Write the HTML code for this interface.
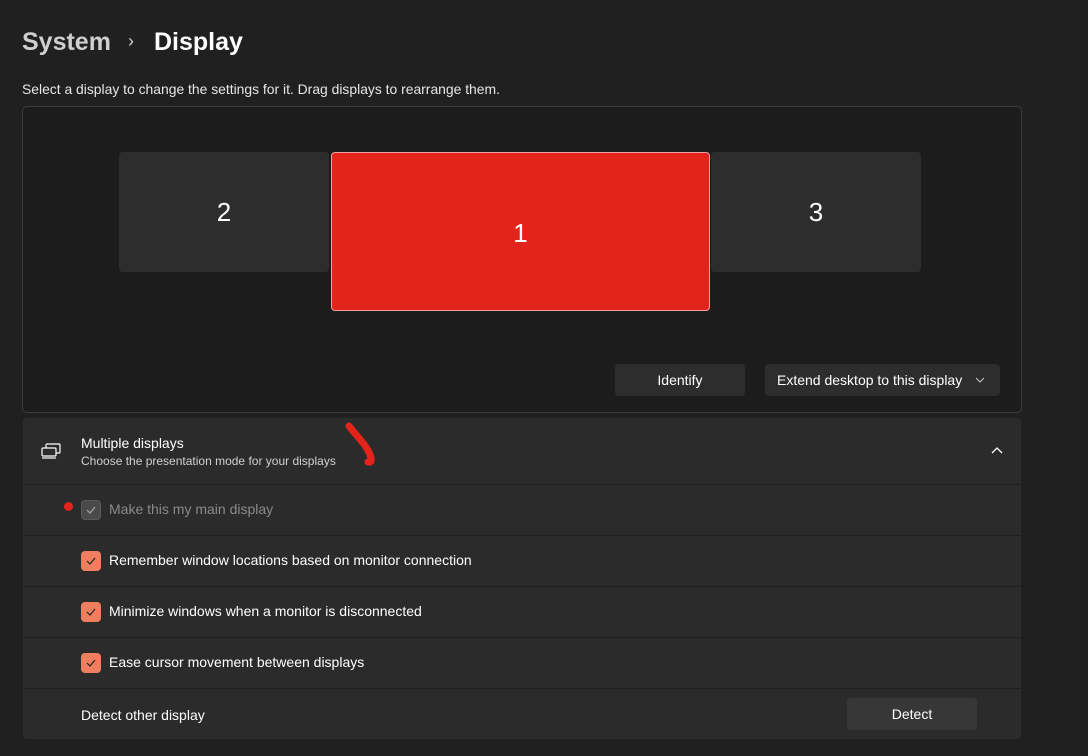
<!DOCTYPE html>
<html><head><style>
*{margin:0;padding:0;box-sizing:border-box}
body{width:1088px;height:756px;background:#202020;font-family:"Segoe UI","Liberation Sans",sans-serif;color:#fff;position:relative;overflow:hidden}
.abs{position:absolute}
.mon{position:absolute;background:#2d2d2d;border-radius:4px;display:flex;align-items:center;justify-content:center;font-size:26px;color:#fff}
.btn{position:absolute;background:#2d2d2d;border-radius:4px;font-size:14px;color:#fff;display:flex;align-items:center}
.row{position:absolute;left:23px;width:998px;background:#2b2b2b}
.cb{position:absolute;left:81px;width:20px;height:20px;border-radius:4px;background:#ef7e61}
.cb svg{position:absolute;left:4px;top:4px}
.lbl{position:absolute;left:109px;font-size:14px;color:#fff}
</style></head><body>
<div class="abs" style="left:22px;top:28px;font-size:25px;font-weight:600;color:#cfcfcf">System</div>
<div class="abs" style="left:128px;top:31px;font-size:18px;color:#cfcfcf">›</div>
<div class="abs" style="left:154px;top:28px;font-size:25px;font-weight:600;color:#fff">Display</div>
<div class="abs" style="left:22px;top:81px;font-size:13.9px;color:#e6e6e6">Select a display to change the settings for it. Drag displays to rearrange them.</div>
<div class="abs" style="left:22px;top:106px;width:1000px;height:307px;background:#1c1c1c;border:1px solid #3c3c3c;border-radius:5px"></div>
<div class="mon" style="left:119px;top:152px;width:210px;height:120px">2</div>
<div class="mon" style="left:711px;top:152px;width:210px;height:120px">3</div>
<div class="mon" style="left:331px;top:152px;width:379px;height:159px;background:#e3241b;border:1px solid #f0a0a0;padding-top:4px">1</div>
<div class="btn" style="left:615px;top:364px;width:130px;height:32px;justify-content:center">Identify</div>
<div class="btn" style="left:765px;top:364px;width:235px;height:32px;padding-left:12px">Extend desktop to this display
<svg class="abs" style="left:210px;top:12px" width="10" height="8"><path d="M1 2l4 4 4-4" stroke="#ccc" fill="none" stroke-width="1"/></svg></div>
<div class="row" style="top:418px;height:66px;border-radius:4px 4px 0 0"></div>
<svg class="abs" style="left:40px;top:443px" width="22" height="16"><rect x="6" y="1" width="14" height="9" rx="1" stroke="#fff" fill="none" stroke-width="1.2"/><rect x="2" y="5" width="14" height="8" rx="1" stroke="#fff" fill="#2b2b2b" stroke-width="1.2"/><path d="M2 15h14" stroke="#fff" stroke-width="1.2"/></svg>
<div class="abs" style="left:81px;top:435px;font-size:14px">Multiple displays</div>
<div class="abs" style="left:81px;top:454px;font-size:12px;color:#d0d0d0">Choose the presentation mode for your displays</div>
<svg class="abs" style="left:340px;top:420px" width="40" height="50"><path d="M9 6C18 18 28 26 31 38Q32 43 28 42" stroke="#e3241b" stroke-width="7" stroke-linecap="round" fill="none"/></svg>
<svg class="abs" style="left:990px;top:446px" width="14" height="10"><path d="M2 7l5-5 5 5" stroke="#fff" fill="none" stroke-width="1.3"/></svg>
<div class="row" style="top:485px;height:50px"></div>
<div class="row" style="top:536px;height:50px"></div>
<div class="row" style="top:587px;height:50px"></div>
<div class="row" style="top:638px;height:50px"></div>
<div class="row" style="top:689px;height:50px;border-radius:0 0 4px 4px"></div>
<div class="abs" style="left:64px;top:502px;width:9px;height:9px;border-radius:50%;background:#e3241b"></div>
<div class="cb" style="top:500px;background:#4a4a4a;border:1px solid #5a5a5a"><svg width="12" height="12" style="left:3px;top:3px"><path d="M2 6l3 3 5-6" stroke="#aaa" fill="none" stroke-width="1.2"/></svg></div>
<div class="lbl" style="top:501px;color:#8a8a8a">Make this my main display</div>
<div class="cb" style="top:551px"><svg width="12" height="12"><path d="M2 6l3 3 5-6" stroke="#222" fill="none" stroke-width="1.2"/></svg></div>
<div class="lbl" style="top:552px">Remember window locations based on monitor connection</div>
<div class="cb" style="top:602px"><svg width="12" height="12"><path d="M2 6l3 3 5-6" stroke="#222" fill="none" stroke-width="1.2"/></svg></div>
<div class="lbl" style="top:603px">Minimize windows when a monitor is disconnected</div>
<div class="cb" style="top:653px"><svg width="12" height="12"><path d="M2 6l3 3 5-6" stroke="#222" fill="none" stroke-width="1.2"/></svg></div>
<div class="lbl" style="top:654px">Ease cursor movement between displays</div>
<div class="abs" style="left:81px;top:707px;font-size:14px">Detect other display</div>
<div class="btn" style="left:847px;top:698px;width:130px;height:32px;justify-content:center;background:#373737">Detect</div>
</body></html>
